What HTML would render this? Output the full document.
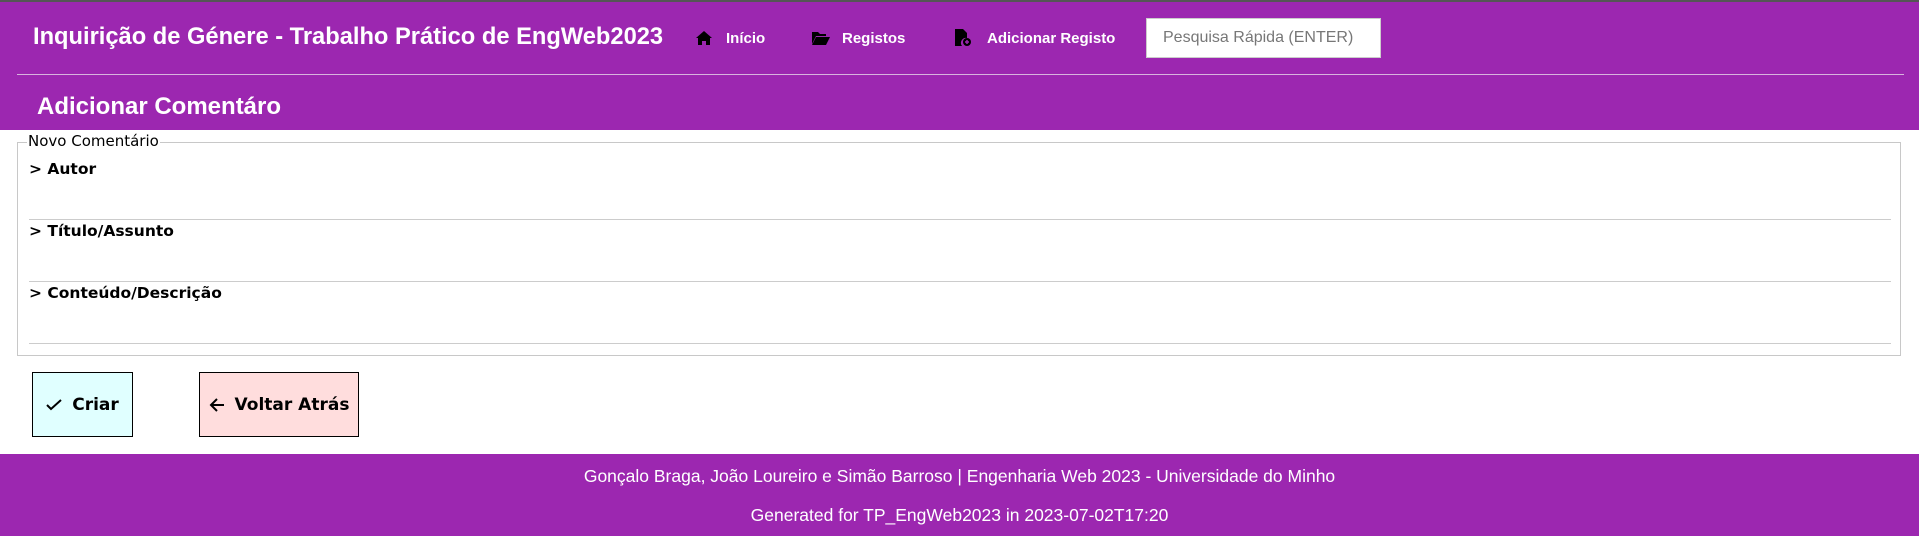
<!DOCTYPE html>
<html><head><meta charset="utf-8"><style>
*{box-sizing:border-box;margin:0;padding:0}
body{width:1919px;height:536px;overflow:hidden;background:#fff;font-family:"Liberation Sans",sans-serif;position:relative}
.hdr{position:absolute;left:0;top:0;width:1919px;height:130px;background:#9c27b0;border-top:2px solid #555}
.title{position:absolute;left:33px;top:22px;color:#fff;font-weight:bold;font-size:23.7px}
.nav{position:absolute;top:28px;color:#fff;font-weight:bold;font-size:15px}
.ic{position:absolute;top:29px}
.search{position:absolute;left:1146px;top:16px;width:235px;height:40px;background:#fff;border:1px solid #ccc;color:#777;font-size:16px;padding:10px 16px}
.hr{position:absolute;left:17px;top:72px;width:1887px;height:1px;background:#d8b4de}
.sub{position:absolute;left:37px;top:91px;color:#fff;font-weight:bold;font-size:24px}
.fs{position:absolute;left:17px;top:142px;width:1884px;height:214px;border:1px solid #c8c8c8}
.lg{position:absolute;left:27px;top:132px;background:#fff;font-family:"DejaVu Sans",sans-serif;font-size:15px;padding:0 1px}
.lab{position:absolute;left:29px;font-family:"DejaVu Sans",sans-serif;font-weight:bold;font-size:15.5px}
.ln{position:absolute;left:29px;width:1862px;height:1px;background:#ccc}
.btn{position:absolute;top:372px;height:65px;border:1px solid #000;font-weight:bold;font-size:17px;font-family:"DejaVu Sans",sans-serif;display:flex;align-items:center;justify-content:center;gap:10px}
.ft{position:absolute;left:0;top:454px;width:1919px;height:82px;background:#9c27b0;color:#fff;text-align:center;font-size:17.5px}
</style></head><body>
<div class="hdr">
<div class="title">Inquirição de Génere - Trabalho Prático de EngWeb2023</div>
<svg class="ic" style="left:696px" width="16" height="14" viewBox="0 0 16 14"><path d="M8 0L0 7h2v7h4v-4h4v4h4V7h2z" fill="#000"/></svg>
<div class="nav" style="left:726px">Início</div>
<svg class="ic" style="left:812px" width="18" height="14" viewBox="0 0 18 14"><path d="M0 1h6l2 2h6v2H4L0 13z M4 6h14l-4 8H0z" fill="#000"/></svg>
<div class="nav" style="left:842px">Registos</div>
<svg class="ic" style="left:955px;top:27px" width="16" height="18" viewBox="0 0 16 18"><path d="M0 0h8l4 4v5a5 5 0 0 0-5 8H0z" fill="#000"/><circle cx="12" cy="13" r="4" fill="#000"/><path d="M12 11v4M10 13h4" stroke="#9c27b0" stroke-width="1.5"/></svg>
<div class="nav" style="left:987px">Adicionar Registo</div>
<div class="search">Pesquisa Rápida (ENTER)</div>
<div class="hr"></div>
<div class="sub">Adicionar Comentáro</div>
</div>
<div class="fs"></div>
<div class="lg">Novo Comentário</div>
<div class="lab" style="top:160px">&gt; Autor</div>
<div class="ln" style="top:219px"></div>
<div class="lab" style="top:222px">&gt; Título/Assunto</div>
<div class="ln" style="top:281px"></div>
<div class="lab" style="top:284px">&gt; Conteúdo/Descrição</div>
<div class="ln" style="top:343px"></div>
<div class="btn" style="left:32px;width:101px;background:#e0ffff">
<svg width="16" height="12" viewBox="0 0 16 12"><path d="M1 6l4 4 10-9" stroke="#000" stroke-width="2" fill="none"/></svg>Criar</div>
<div class="btn" style="left:199px;width:160px;background:#ffdddd">
<svg width="16" height="14" viewBox="0 0 16 14"><path d="M15 7H2M8 1L2 7l6 6" stroke="#000" stroke-width="2" fill="none"/></svg>Voltar Atrás</div>
<div class="ft"><div style="position:absolute;top:12px;width:100%">Gonçalo Braga, João Loureiro e Simão Barroso | Engenharia Web 2023 - Universidade do Minho</div>
<div style="position:absolute;top:51px;width:100%">Generated for TP_EngWeb2023 in 2023-07-02T17:20</div></div>
</body></html>
